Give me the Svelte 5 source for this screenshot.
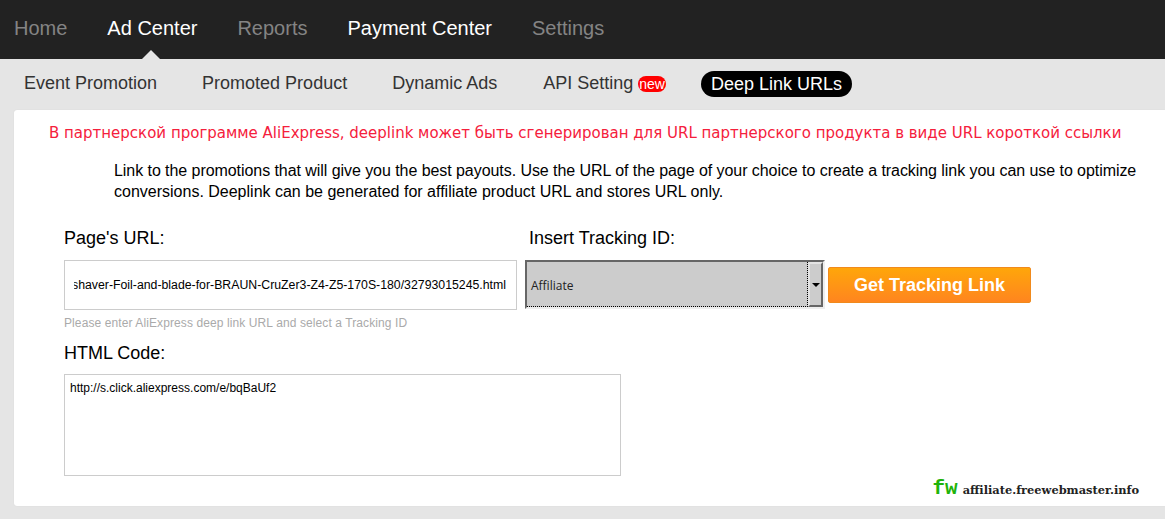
<script>
    const mainNav = [
        { label: 'Home', on: false },
        { label: 'Ad Center', on: true },
        { label: 'Reports', on: false },
        { label: 'Payment Center', on: true },
        { label: 'Settings', on: false }
    ];
    const subNav = ['Event Promotion', 'Promoted Product', 'Dynamic Ads'];
</script>

<div class="page">
    <nav class="main-nav">
        {#each mainNav as item, i}
            <a class:on={item.on} class:current={i === 1} href="#top">{item.label}</a>
        {/each}
    </nav>

    <nav class="sub-nav">
        {#each subNav as item}
            <a href="#top">{item}</a>
        {/each}
        <a class="api" href="#top">API Setting <span class="new">new</span></a>
        <a class="active" href="#top">Deep Link URLs</a>
    </nav>

    <main class="panel">
        <p class="notice">В партнерской программе AliExpress, deeplink может быть сгенерирован для URL партнерского продукта в виде URL короткой ссылки</p>
        <p class="intro"><span class="tight">Link to the promotions that will give you the best payouts. Use the URL of the page of your choice to create a tracking link you can use to optimize</span> conversions. Deeplink can be generated for affiliate product URL and stores URL only.</p>

        <div class="form-row">
            <div class="url-col">
                <label for="url">Page's URL:</label>
                <div class="url-input" id="url"><div class="url-clip"><span>Electric-shaver-Foil-and-blade-for-BRAUN-CruZer3-Z4-Z5-170S-180/32793015245.html</span></div></div>
                <p class="hint">Please enter AliExpress deep link URL and select a Tracking ID</p>
            </div>
            <div class="id-col">
                <label for="tracking">Insert Tracking ID:</label>
                <div class="id-controls">
                    <div class="select" id="tracking">
                        <div class="select-value">Affiliate</div>
                        <div class="select-arrow"><i></i></div>
                    </div>
                    <button type="button">Get Tracking Link</button>
                </div>
            </div>
        </div>

        <label class="code-label" for="code">HTML Code:</label>
        <textarea id="code" readonly>http://s.click.aliexpress.com/e/bqBaUf2</textarea>

        <div class="watermark"><b>fw</b> <span>affiliate.freewebmaster.info</span></div>
    </main>
</div>

<style>
:global(body) {
    margin: 0;
    background: #e5e5e5;
}
.page {
    height: 519px;
    overflow: hidden;
    font-family: "Liberation Sans", Arial, sans-serif;
    background: #e5e5e5;
}
a {
    text-decoration: none;
}
.main-nav {
    height: 59px;
    background: #222;
    display: flex;
    align-items: center;
    padding-left: 14px;
    gap: 40px;
    font-size: 20px;
    box-sizing: border-box;
    padding-bottom: 2px;
}
.main-nav a {
    color: #848484;
    position: relative;
}
.main-nav a.on {
    color: #fff;
}
.main-nav a.current::after {
    content: "";
    position: absolute;
    left: 35px;
    top: 33px;
    border: 9px solid transparent;
    border-top: 0;
    border-bottom-color: #e5e5e5;
}
.sub-nav {
    height: 51px;
    display: flex;
    align-items: center;
    padding: 0 0 2px 24px;
    box-sizing: border-box;
    gap: 45px;
    font-size: 18px;
}
.sub-nav a {
    color: #333;
}
.sub-nav a.api {
    margin-left: 1px;
}
.new {
    display: inline-block;
    background: #f00;
    color: #fff;
    font-size: 14px;
    line-height: 16px;
    border-radius: 8px;
    padding: 0 1px;
}
.sub-nav a.active {
    background: #000;
    color: #fff;
    border-radius: 13px;
    padding: 0 10px;
    line-height: 26px;
    margin-left: -10px;
}
.panel {
    position: relative;
    height: 396px;
    margin-left: 14px;
    background: #fff;
    border-radius: 3px 0 0 3px;
    box-shadow: 0 0 1px #ccc;
    box-sizing: border-box;
    padding-top: 13px;
}
.notice {
    margin: 0 0 0 35px;
    font-family: "DejaVu Sans", Verdana, sans-serif;
    font-size: 15px;
    line-height: 20px;
    color: #f5203c;
    white-space: nowrap;
}
.intro {
    margin: 17px 10px 0 100px;
    font-size: 16px;
    line-height: 21px;
    color: #000;
}
.tight {
    letter-spacing: -0.06px;
}
.form-row {
    display: flex;
    margin: 25px 0 0 50px;
}
label {
    display: block;
    font-size: 18px;
    line-height: 22px;
    color: #000;
}
.url-col {
    width: 465px;
}
.url-input {
    margin-top: 11px;
    width: 453px;
    height: 50px;
    border: 1px solid #ccc;
    box-sizing: border-box;
    padding: 0 10px 0 9px;
    display: flex;
    align-items: center;
}
.url-clip {
    flex: 1;
    min-width: 0;
    display: flex;
    justify-content: flex-end;
    overflow: hidden;
    font-size: 12.3px;
    white-space: nowrap;
    color: #000;
}
.hint {
    margin: 6px 0 0;
    font-size: 12px;
    line-height: 14px;
    color: #aaa;
    letter-spacing: 0.1px;
}
.id-controls {
    margin-top: 11px;
    height: 50px;
    display: flex;
    align-items: center;
    gap: 3px;
    margin-left: -4px;
}
.select {
    align-self: flex-start;
    width: 300px;
    height: 49px;
    display: flex;
    background: #ccc;
    border-top: 2px solid #666;
    border-left: 2px solid #666;
    border-bottom: 2px solid #eee;
    border-right: 2px solid #eee;
    box-sizing: border-box;
    font-family: "Open Sans", sans-serif;
    font-size: 12px;
    color: #222;
}
.select-value {
    flex: 1;
    display: flex;
    align-items: center;
    padding: 2px 0 0 4px;
    border-right: 1px dotted #000;
    border-bottom: 1px dotted #000;
}
.select-arrow {
    width: 15px;
    background: #ccc;
    border-top: 2px solid #e4e4e4;
    border-left: 2px solid #e4e4e4;
    border-right: 2px solid #666;
    border-bottom: 2px solid #666;
    display: flex;
    align-items: center;
    justify-content: center;
    box-sizing: border-box;
}
.select-arrow i {
    border: 4px solid transparent;
    border-top: 4px solid #000;
    border-bottom: 0;
}
button {
    width: 203px;
    height: 36px;
    border: 1px solid #f08a1d;
    border-radius: 2px;
    background: linear-gradient(#ffa60a, #ff851f);
    color: #fff;
    font-family: "Liberation Sans", Arial, sans-serif;
    font-weight: bold;
    font-size: 18px;
    padding: 0;
}
.code-label {
    margin: 12px 0 0 50px;
}
textarea {
    display: block;
    margin: 10px 0 0 50px;
    width: 557px;
    height: 102px;
    border: 1px solid #ccc;
    box-sizing: border-box;
    padding: 6px 5px;
    font-family: "Liberation Sans", Arial, sans-serif;
    font-size: 12px;
    line-height: 14px;
    color: #000;
    resize: none;
    outline: none;
}
.watermark {
    position: absolute;
    right: 26px;
    bottom: 6px;
    display: flex;
    align-items: baseline;
    gap: 5px;
    color: #222;
}
.watermark b {
    font-family: "Liberation Mono", monospace;
    font-size: 21px;
    color: #1fb30a;
}
.watermark span {
    font-family: "DejaVu Serif", serif;
    font-weight: bold;
    font-size: 11.4px;
}
</style>
